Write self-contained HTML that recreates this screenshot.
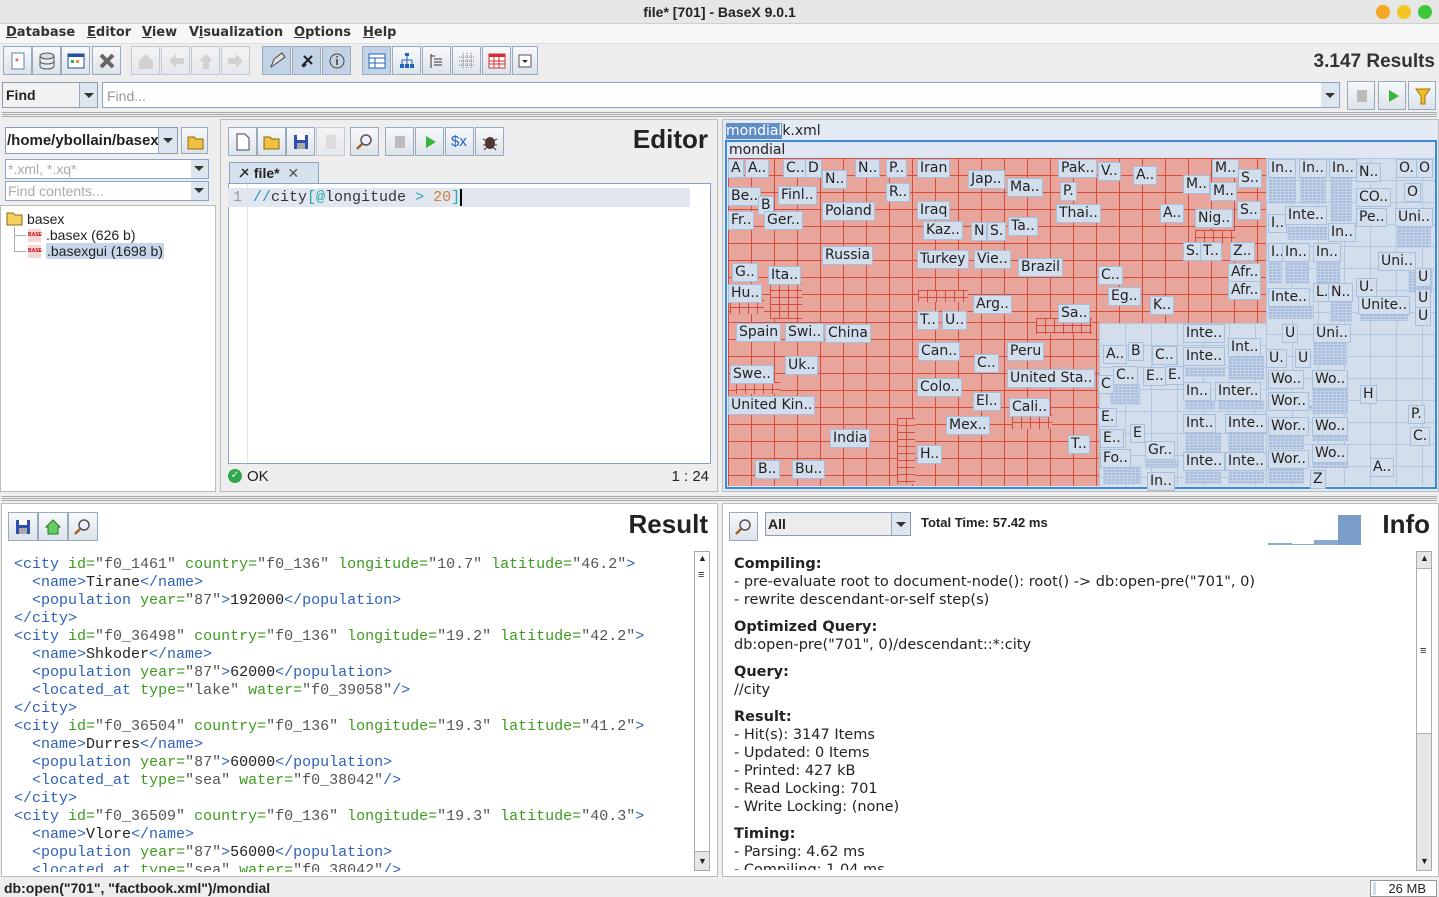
<!DOCTYPE html>
<html><head><meta charset="utf-8">
<style>
*{box-sizing:border-box;margin:0;padding:0}
body{width:1439px;height:897px;overflow:hidden;background:#eeeeee;font-family:"Liberation Sans",sans-serif;font-size:14px;color:#222;position:relative}
.a{position:absolute}
.btn{position:absolute;width:29px;height:29px;border:1px solid #9aaabd;background:linear-gradient(#f8f9fb,#dde3ea);}
.btn.sel{background:#c3d3e6}
.btn svg{position:absolute;left:5px;top:5px}
.mono{font-family:"Liberation Mono",monospace;font-size:15px}
.t{color:#2f62b8}.n{color:#3b9b1e}.v{color:#555}
.red{background-color:#e8a59c;background-image:linear-gradient(#d44c3c 1px,transparent 1px),linear-gradient(90deg,#d44c3c 1px,transparent 1px);background-size:23px 17px}
.red2{background-color:#e8a59c;background-image:linear-gradient(#d44c3c 1px,transparent 1px),linear-gradient(90deg,#d44c3c 1px,transparent 1px);background-size:9px 7px}
.blu{background-color:#d3deed;background-image:linear-gradient(#b3c6df 1px,transparent 1px),linear-gradient(90deg,#b3c6df 1px,transparent 1px);background-size:26px 22px}
.dk{position:absolute;background-color:#a9bedc;background-image:linear-gradient(#c3d2e6 1px,transparent 1px),linear-gradient(90deg,#c3d2e6 1px,transparent 1px);background-size:4px 3px}
.tm i{position:absolute;font-style:normal;font-family:"DejaVu Sans",sans-serif;font-size:14px;line-height:17px;background:#d3deed;border:1px solid #a8bfdc;padding:0 2px;color:#222;white-space:nowrap}
.info div{height:18px;line-height:18px}
.info b{font-weight:bold}
.hd{font-weight:bold;font-size:26px;color:#222}
.mn{position:absolute;top:25px;font-size:14px;font-weight:bold;color:#333;font-family:"DejaVu Sans",sans-serif;font-size:13px}
</style></head><body>
<div class="a" style="left:0;top:0;width:1439px;height:24px;background:#e6e6e5;border-bottom:1px solid #d0d0d0"></div>
<div class="a" style="left:0;top:4px;width:1439px;text-align:center;font-weight:bold;font-size:14px">file* [701] - BaseX 9.0.1</div>
<div class="a" style="left:1376px;top:5px;width:14px;height:14px;border-radius:7px;background:#f5a623"></div>
<div class="a" style="left:1397px;top:5px;width:14px;height:14px;border-radius:7px;background:#f3c623"></div>
<div class="a" style="left:1418px;top:5px;width:14px;height:14px;border-radius:7px;background:#3ec83e"></div>
<div class="a" style="left:0;top:24px;width:1439px;height:20px;background:#f7f7f7;border-bottom:1px solid #ddd"></div>
<div class="mn" style="left:6px"><u>D</u>atabase</div>
<div class="mn" style="left:87px"><u>E</u>ditor</div>
<div class="mn" style="left:142px"><u>V</u>iew</div>
<div class="mn" style="left:189px">V<u>i</u>sualization</div>
<div class="mn" style="left:294px"><u>O</u>ptions</div>
<div class="mn" style="left:363px"><u>H</u>elp</div>
<div class="btn" style="left:3px;top:46px"><svg width="18" height="18"><rect x="3" y="1" width="12" height="16" fill="#fff" stroke="#6a7ea0"/><text x="6" y="13" font-size="10" fill="#d02020">*</text></svg></div>
<div class="btn" style="left:32px;top:46px"><svg width="18" height="18"><ellipse cx="9" cy="4" rx="7" ry="3" fill="#ddd" stroke="#555"/><path d="M2 4v10c0 4 14 4 14 0V4M2 9c0 4 14 4 14 0" fill="none" stroke="#555"/></svg></div>
<div class="btn" style="left:61px;top:46px"><svg width="18" height="18"><rect x="1" y="2" width="16" height="14" fill="#fff" stroke="#2050a0"/><rect x="1" y="2" width="16" height="3" fill="#2050a0"/><rect x="4" y="8" width="3" height="3" fill="#2a7"/><rect x="9" y="8" width="3" height="3" fill="#d93"/></svg></div>
<div class="btn" style="left:92px;top:46px"><svg width="18" height="18"><path d="M3 3l12 12M15 3L3 15" stroke="#666" stroke-width="4"/></svg></div>
<div class="btn" style="left:131px;top:46px;opacity:.55"><svg width="18" height="18"><path d="M2 9l7-7 7 7v8H2z" fill="#bbb"/></svg></div>
<div class="btn" style="left:161px;top:46px;opacity:.55"><svg width="18" height="18"><path d="M2 9l7-7v4h8v6H9v4z" fill="#bbb"/></svg></div>
<div class="btn" style="left:191px;top:46px;opacity:.55"><svg width="18" height="18"><path d="M9 2l7 7h-4v8H6V9H2z" fill="#bbb"/></svg></div>
<div class="btn" style="left:221px;top:46px;opacity:.55"><svg width="18" height="18"><path d="M16 9L9 2v4H1v6h8v4z" fill="#bbb"/></svg></div>
<div class="btn sel" style="left:262px;top:46px"><svg width="18" height="18"><path d="M3 15l3-8 8-6 3 4-8 6z" fill="#ddd" stroke="#444"/></svg></div>
<div class="btn sel" style="left:292px;top:46px"><svg width="18" height="18"><path d="M4 14l10-10M6 4l8 8M8 12l-3 3" stroke="#222" stroke-width="2"/></svg></div>
<div class="btn sel" style="left:322px;top:46px"><svg width="18" height="18"><circle cx="9" cy="9" r="7" fill="none" stroke="#444"/><path d="M9 7v6M9 4v1.5" stroke="#444" stroke-width="1.6"/></svg></div>
<div class="btn sel" style="left:362px;top:46px"><svg width="18" height="18"><rect x="1" y="2" width="16" height="14" fill="#fff" stroke="#2060c0"/><path d="M1 6h16M7 6v10M1 11h16" stroke="#2060c0"/></svg></div>
<div class="btn" style="left:392px;top:46px"><svg width="18" height="18"><path d="M9 3v5M4 8h10M4 8v4M9 8v4M14 8v4" stroke="#2060c0" fill="none"/><rect x="7" y="1" width="4" height="3" fill="#2060c0"/><rect x="2" y="12" width="4" height="4" fill="#2060c0"/><rect x="7" y="12" width="4" height="4" fill="#2060c0"/><rect x="12" y="12" width="4" height="4" fill="#2060c0"/></svg></div>
<div class="btn" style="left:422px;top:46px"><svg width="18" height="18"><path d="M3 2v14M3 4h4M6 7h8M6 10h8M6 13h8" stroke="#333"/></svg></div>
<div class="btn" style="left:452px;top:46px"><svg width="18" height="18"><path d="M1 5h16M1 9h16M1 13h16M5 1v16M9 1v16M13 1v16" stroke="#777" stroke-dasharray="1 1"/></svg></div>
<div class="btn" style="left:482px;top:46px"><svg width="18" height="18"><rect x="1" y="2" width="16" height="14" fill="#fff" stroke="#d03030"/><rect x="1" y="2" width="16" height="3" fill="#d03030"/><path d="M1 9h16M1 12h16M6 5v11M11 5v11" stroke="#d03030"/></svg></div>
<div class="btn" style="left:512px;top:46px;width:26px"><svg width="14" height="18"><rect x="1" y="3" width="12" height="12" fill="#fff" stroke="#555"/><path d="M4 8h6l-3 3z" fill="#333"/></svg></div>
<div class="a" style="right:4px;top:51px;font-weight:bold;font-size:19px;color:#333">3.147 Results</div>
<div class="a" style="left:2px;top:82px;width:96px;height:26px;border:1px solid #8a9bb3;background:#f2f2f2;font-weight:bold;padding:4px 3px">Find</div>
<div class="a" style="left:79px;top:83px;width:18px;height:24px;background:#dde5ef;border-left:1px solid #9ab"><div class="a" style="left:4px;top:10px;border:5px solid transparent;border-top:5px solid #333"></div></div>
<div class="a" style="left:102px;top:82px;width:1238px;height:26px;border:1px solid #8aa4c8;background:#fff;color:#999;padding:5px 4px">Find...</div>
<div class="a" style="left:1321px;top:83px;width:18px;height:24px;background:#dde5ef"><div class="a" style="left:4px;top:10px;border:5px solid transparent;border-top:5px solid #333"></div></div>
<div class="btn" style="left:1347px;top:81px;width:28px"><div class="a" style="left:9px;top:8px;width:10px;height:12px;background:#bbb"></div></div>
<div class="btn" style="left:1378px;top:81px;width:28px"><svg width="18" height="18"><path d="M5 3l10 6-10 6z" fill="#3ab53a"/></svg></div>
<div class="btn" style="left:1408px;top:81px;width:28px"><svg width="18" height="18"><path d="M2 2h14l-5 7v8h-4V9z" fill="#f0c020" stroke="#a07010"/></svg></div>
<div class="a" style="left:2px;top:112px;width:1435px;height:5px;border-top:1px solid #aaa;border-bottom:1px solid #aaa"><div style="border-top:1px solid #aaa;margin-top:1px"></div></div>
<div class="a" style="left:0;top:119px;width:216px;height:373px;background:#fff;border:1px solid #bbb"></div>
<div class="a" style="left:0;top:119px;width:216px;height:86px;background:#eee"></div>
<div class="a" style="left:5px;top:127px;width:173px;height:27px;border:1px solid #8a9bb3;background:#fff;font-weight:bold;font-size:15px;padding:4px 1px;overflow:hidden;white-space:nowrap">/home/ybollain/basex</div>
<div class="a" style="left:158px;top:128px;width:19px;height:25px;background:#dde5ef;border-left:1px solid #9ab"><div class="a" style="left:4px;top:10px;border:5px solid transparent;border-top:5px solid #333"></div></div>
<div class="btn" style="left:181px;top:127px;width:27px;height:27px"><svg width="18" height="18"><path d="M1 4h6l2 2h7v10H1z" fill="#f0c040" stroke="#8a6a10"/></svg></div>
<div class="a" style="left:5px;top:159px;width:204px;height:20px;border:1px solid #8aa4c8;background:#fff;color:#aaa;padding:1px 2px">*.xml, *.xq*</div>
<div class="a" style="left:191px;top:160px;width:17px;height:18px;background:#dde5ef"><div class="a" style="left:3px;top:6px;border:5px solid transparent;border-top:5px solid #333"></div></div>
<div class="a" style="left:5px;top:181px;width:204px;height:20px;border:1px solid #8aa4c8;background:#fff;color:#aaa;padding:1px 2px">Find contents...</div>
<div class="a" style="left:191px;top:182px;width:17px;height:18px;background:#dde5ef"><div class="a" style="left:3px;top:6px;border:5px solid transparent;border-top:5px solid #333"></div></div>
<div class="a" style="left:0;top:205px;width:216px;border-top:1px solid #bbb"></div>
<svg class="a" style="left:6px;top:211px" width="18" height="15"><path d="M1 2h6l2 2h7v10H1z" fill="#f7d060" stroke="#8a6a10"/></svg>
<div class="a" style="left:27px;top:211px;font-size:14px">basex</div>
<div class="a" style="left:14px;top:227px;width:1px;height:25px;background:#aab"></div>
<div class="a" style="left:14px;top:235px;width:12px;height:1px;background:#aab"></div>
<div class="a" style="left:14px;top:251px;width:12px;height:1px;background:#aab"></div>
<div class="a" style="left:28px;top:229px;width:13px;height:13px;background:#f3d6d6;font-size:5px;color:#c00;font-weight:bold;line-height:13px">BASE</div>
<div class="a" style="left:28px;top:245px;width:13px;height:13px;background:#f3d6d6;font-size:5px;color:#c00;font-weight:bold;line-height:13px">BASE</div>
<div class="a" style="left:46px;top:227px;font-size:14px">.basex (626 b)</div>
<div class="a" style="left:46px;top:243px;font-size:14px;background:#c6d5ea;padding:0 1px">.basexgui (1698 b)</div>
<div class="a" style="left:220px;top:119px;width:498px;height:373px;background:#eee;border:1px solid #bbb"></div>
<div class="btn" style="left:228px;top:127px"><svg width="18" height="18"><path d="M3 1h8l4 4v12H3z" fill="#fff" stroke="#445"/></svg></div>
<div class="btn" style="left:257px;top:127px"><svg width="18" height="18"><path d="M1 4h6l2 2h7v10H1z" fill="#f0c040" stroke="#8a6a10"/></svg></div>
<div class="btn" style="left:286px;top:127px"><svg width="18" height="18"><rect x="2" y="2" width="14" height="14" fill="#3050b0"/><rect x="5" y="2" width="8" height="5" fill="#fff"/><rect x="5" y="10" width="8" height="6" fill="#aaa"/></svg></div>
<div class="btn" style="left:316px;top:127px;opacity:.5"><svg width="18" height="18"><rect x="4" y="2" width="10" height="14" fill="#ccc"/></svg></div>
<div class="btn" style="left:350px;top:127px"><svg width="18" height="18"><circle cx="10" cy="7" r="5" fill="#eef" stroke="#555" stroke-width="1.5"/><path d="M6 11l-5 5" stroke="#a06020" stroke-width="2.5"/></svg></div>
<div class="btn" style="left:385px;top:127px"><div class="a" style="left:9px;top:8px;width:10px;height:12px;background:#bbb"></div></div>
<div class="btn" style="left:415px;top:127px"><svg width="18" height="18"><path d="M5 3l10 6-10 6z" fill="#3ab53a"/></svg></div>
<div class="btn" style="left:445px;top:127px"><span class="a" style="left:5px;top:5px;color:#2060c0;font-size:15px">$x</span></div>
<div class="btn" style="left:475px;top:127px"><svg width="18" height="18"><ellipse cx="9" cy="10" rx="5" ry="6" fill="#533"/><path d="M2 6l4 2M16 6l-4 2M2 12h4M12 12h4M3 17l3-3M15 17l-3-3" stroke="#333"/></svg></div>
<div class="a hd" style="right:731px;top:124px">Editor</div>
<div class="a" style="left:229px;top:162px;width:90px;height:22px;background:#d6e1ee;border:1px solid #8aa4c8;border-bottom:none;font-weight:bold;font-size:14px;padding:2px 8px"><svg width="12" height="12" style="vertical-align:-1px"><path d="M2 10l8-8M4 2l6 6" stroke="#222" stroke-width="1.5"/></svg>&nbsp;file*&nbsp;&nbsp;<span style="font-weight:normal;color:#555">&#x2715;</span></div>
<div class="a" style="left:228px;top:183px;width:483px;height:281px;background:#fff;border:1px solid #8aa4c8"></div>
<div class="a" style="left:248px;top:188px;width:442px;height:19px;background:#e1e7f0"></div>
<div class="a" style="left:228px;top:188px;width:20px;height:19px;background:#e1e7f0"></div>
<div class="a" style="left:247px;top:184px;width:1px;height:279px;background:#e4e4e4"></div>
<div class="a mono" style="left:233px;top:189px;color:#999">1</div>
<div class="a mono" style="left:253px;top:189px;color:#333"><span style="color:#2a8fbd">//</span>city<span style="color:#2aa8a8">[@</span>longitude <span style="color:#2aa8a8">&gt;</span> <span style="color:#d0803a">20</span><span style="color:#2aa8a8">]</span><span style="border-left:2px solid #000"></span></div>
<div class="a" style="left:228px;top:469px;width:14px;height:14px;border-radius:7px;background:#2ea84a;color:#fff;font-size:10px;text-align:center;line-height:14px">&#10003;</div>
<div class="a" style="left:247px;top:468px;font-size:15px">OK</div>
<div class="a" style="right:730px;top:468px;font-size:15px">1 : 24</div>
<div class="a" style="left:722px;top:119px;width:717px;height:373px;background:#e3eaf4;border:1px solid #bbb"></div>
<div class="a" style="left:726px;top:123px;font-size:15px;line-height:17px;font-family:'DejaVu Sans',sans-serif;font-size:14px"><span style="background:#5f8dc8;color:#fff">mondial</span>k.xml</div>
<div class="a" style="left:725px;top:140px;width:712px;height:349px;border:2px solid #3a8ad8;background:#dfe6f1"></div>
<div class="a" style="left:729px;top:142px;font-size:14px;font-family:'DejaVu Sans',sans-serif">mondial</div>
<div class="tm">
<div class="a red" style="left:728px;top:158px;width:538px;height:165px"></div>
<div class="a red" style="left:728px;top:322px;width:371px;height:164px"></div>
<div class="a red2" style="left:770px;top:283px;width:32px;height:36px"></div>
<div class="a red2" style="left:897px;top:418px;width:18px;height:66px"></div>
<div class="a red2" style="left:1036px;top:318px;width:56px;height:16px"></div>
<div class="a red2" style="left:1012px;top:415px;width:40px;height:14px"></div>
<div class="a red2" style="left:1195px;top:230px;width:40px;height:14px"></div>
<div class="a red2" style="left:730px;top:300px;width:34px;height:14px"></div>
<div class="a red2" style="left:736px;top:382px;width:44px;height:12px"></div>
<div class="a red2" style="left:918px;top:290px;width:50px;height:12px"></div>
<div class="a blu" style="left:1266px;top:158px;width:169px;height:328px"></div>
<div class="a blu" style="left:1099px;top:323px;width:167px;height:163px"></div>
<div class="dk" style="left:1268px;top:176px;width:28px;height:28px"></div>
<div class="dk" style="left:1300px;top:176px;width:26px;height:28px"></div>
<div class="dk" style="left:1330px;top:176px;width:22px;height:46px"></div>
<div class="dk" style="left:1287px;top:226px;width:40px;height:14px"></div>
<div class="dk" style="left:1397px;top:226px;width:34px;height:22px"></div>
<div class="dk" style="left:1268px;top:262px;width:14px;height:22px"></div>
<div class="dk" style="left:1285px;top:262px;width:24px;height:22px"></div>
<div class="dk" style="left:1316px;top:262px;width:24px;height:22px"></div>
<div class="dk" style="left:1408px;top:268px;width:25px;height:25px"></div>
<div class="dk" style="left:1268px;top:305px;width:46px;height:14px"></div>
<div class="dk" style="left:1330px;top:300px;width:22px;height:22px"></div>
<div class="dk" style="left:1360px;top:313px;width:48px;height:8px"></div>
<div class="dk" style="left:1313px;top:341px;width:34px;height:24px"></div>
<div class="dk" style="left:1312px;top:388px;width:36px;height:26px"></div>
<div class="dk" style="left:1228px;top:355px;width:36px;height:25px"></div>
<div class="dk" style="left:1185px;top:367px;width:40px;height:10px"></div>
<div class="dk" style="left:1110px;top:383px;width:30px;height:22px"></div>
<div class="dk" style="left:1185px;top:400px;width:30px;height:10px"></div>
<div class="dk" style="left:1218px;top:400px;width:46px;height:10px"></div>
<div class="dk" style="left:1185px;top:432px;width:36px;height:20px"></div>
<div class="dk" style="left:1228px;top:432px;width:36px;height:20px"></div>
<div class="dk" style="left:1268px;top:435px;width:36px;height:14px"></div>
<div class="dk" style="left:1312px;top:435px;width:36px;height:6px"></div>
<div class="dk" style="left:1268px;top:405px;width:44px;height:5px"></div>
<div class="dk" style="left:1145px;top:460px;width:34px;height:8px"></div>
<div class="dk" style="left:1103px;top:466px;width:38px;height:18px"></div>
<div class="dk" style="left:1185px;top:468px;width:36px;height:16px"></div>
<div class="dk" style="left:1228px;top:468px;width:36px;height:16px"></div>
<div class="dk" style="left:1268px;top:468px;width:36px;height:16px"></div>
<div class="dk" style="left:1312px;top:462px;width:36px;height:6px"></div>
<i style="left:728px;top:159px">A</i><i style="left:745px;top:159px">A..</i><i style="left:783px;top:159px">C..</i><i style="left:805px;top:159px">D</i>
<i style="left:822px;top:170px">N..</i><i style="left:855px;top:159px">N..</i><i style="left:886px;top:159px">P..</i><i style="left:917px;top:159px">Iran</i>
<i style="left:968px;top:170px">Jap..</i><i style="left:1007px;top:178px">Ma..</i><i style="left:1058px;top:159px">Pak..</i><i style="left:1098px;top:162px">V..</i><i style="left:1133px;top:166px">A..</i>
<i style="left:1212px;top:159px">M..</i><i style="left:1238px;top:169px">S..</i>
<i style="left:728px;top:187px">Be..</i><i style="left:758px;top:196px">B</i><i style="left:778px;top:186px">Finl..</i><i style="left:886px;top:183px">R..</i><i style="left:1060px;top:182px">P.</i><i style="left:1210px;top:182px">M..</i><i style="left:1183px;top:175px">M..</i>
<i style="left:822px;top:202px">Poland</i><i style="left:917px;top:201px">Iraq</i><i style="left:1056px;top:204px">Thai..</i><i style="left:1160px;top:204px">A..</i><i style="left:1195px;top:209px">Nig..</i><i style="left:1237px;top:201px">S..</i>
<i style="left:728px;top:211px">Fr..</i><i style="left:764px;top:211px">Ger..</i><i style="left:923px;top:221px">Kaz..</i><i style="left:971px;top:222px">N</i><i style="left:987px;top:222px">S.</i><i style="left:1008px;top:217px">Ta..</i>
<i style="left:822px;top:246px">Russia</i><i style="left:917px;top:250px">Turkey</i><i style="left:974px;top:250px">Vie..</i><i style="left:1018px;top:258px">Brazil</i><i style="left:1183px;top:242px">S.</i><i style="left:1200px;top:242px">T..</i><i style="left:1230px;top:242px">Z..</i>
<i style="left:732px;top:263px">G..</i><i style="left:768px;top:266px">Ita..</i><i style="left:728px;top:284px">Hu..</i><i style="left:1098px;top:266px">C..</i><i style="left:1228px;top:263px">Afr..</i><i style="left:1228px;top:281px">Afr..</i>
<i style="left:973px;top:295px">Arg..</i><i style="left:1108px;top:287px">Eg..</i><i style="left:1150px;top:296px">K..</i><i style="left:1058px;top:304px">Sa..</i><i style="left:917px;top:311px">T..</i><i style="left:942px;top:311px">U..</i>
<i style="left:736px;top:323px">Spain</i><i style="left:785px;top:323px">Swi..</i><i style="left:825px;top:324px">China</i><i style="left:1183px;top:324px">Inte..</i><i style="left:1313px;top:324px">Uni..</i>
<i style="left:918px;top:342px">Can..</i><i style="left:1007px;top:342px">Peru</i><i style="left:785px;top:356px">Uk..</i><i style="left:974px;top:354px">C..</i><i style="left:1183px;top:347px">Inte..</i><i style="left:1228px;top:338px">Int..</i>
<i style="left:730px;top:365px">Swe..</i><i style="left:1007px;top:369px">United Sta..</i><i style="left:1113px;top:366px">C..</i><i style="left:1268px;top:370px">Wo..</i><i style="left:1312px;top:370px">Wo..</i>
<i style="left:917px;top:378px">Colo..</i><i style="left:1183px;top:382px">In..</i><i style="left:1215px;top:382px">Inter..</i><i style="left:1268px;top:392px">Wor..</i>
<i style="left:728px;top:396px">United Kin..</i><i style="left:973px;top:392px">El..</i><i style="left:1009px;top:398px">Cali..</i>
<i style="left:946px;top:416px">Mex..</i><i style="left:1183px;top:414px">Int..</i><i style="left:1225px;top:414px">Inte..</i><i style="left:1268px;top:417px">Wor..</i><i style="left:1312px;top:417px">Wo..</i>
<i style="left:830px;top:429px">India</i><i style="left:1068px;top:435px">T..</i><i style="left:1100px;top:429px">E..</i><i style="left:1145px;top:441px">Gr..</i><i style="left:917px;top:445px">H..</i><i style="left:1312px;top:444px">Wo..</i>
<i style="left:1100px;top:449px">Fo..</i><i style="left:1183px;top:452px">Inte..</i><i style="left:1225px;top:452px">Inte..</i><i style="left:1268px;top:450px">Wor..</i>
<i style="left:755px;top:460px">B..</i><i style="left:792px;top:460px">Bu..</i><i style="left:1147px;top:472px">In..</i>
<i style="left:1268px;top:214px">I..</i><i style="left:1285px;top:206px">Inte..</i><i style="left:1328px;top:223px">In..</i><i style="left:1268px;top:159px">In..</i><i style="left:1299px;top:159px">In..</i><i style="left:1329px;top:159px">In..</i>
<i style="left:1356px;top:163px">N..</i><i style="left:1396px;top:159px">O.</i><i style="left:1416px;top:159px">O</i><i style="left:1356px;top:188px">CO..</i><i style="left:1356px;top:208px">Pe..</i><i style="left:1395px;top:208px">Uni..</i><i style="left:1404px;top:183px">O</i>
<i style="left:1268px;top:243px">I..</i><i style="left:1282px;top:243px">In..</i><i style="left:1313px;top:243px">In..</i><i style="left:1378px;top:252px">Uni..</i><i style="left:1268px;top:288px">Inte..</i><i style="left:1313px;top:283px">L.</i><i style="left:1328px;top:283px">N..</i>
<i style="left:1356px;top:278px">U.</i><i style="left:1358px;top:296px">Unite..</i><i style="left:1415px;top:268px">U</i><i style="left:1415px;top:289px">U</i><i style="left:1415px;top:307px">U</i>
<i style="left:1282px;top:324px">U</i><i style="left:1266px;top:349px">U.</i><i style="left:1295px;top:349px">U</i><i style="left:1360px;top:385px">H</i><i style="left:1408px;top:405px">P.</i><i style="left:1410px;top:427px">C.</i><i style="left:1370px;top:458px">A..</i><i style="left:1310px;top:470px">Z</i>
<i style="left:1103px;top:345px">A..</i><i style="left:1128px;top:342px">B</i><i style="left:1152px;top:346px">C..</i><i style="left:1098px;top:375px">C</i><i style="left:1143px;top:367px">E..</i><i style="left:1165px;top:366px">E.</i><i style="left:1098px;top:408px">E.</i><i style="left:1130px;top:424px">E</i>
</div>
<div class="a" style="left:2px;top:496px;width:1435px;height:5px;border-top:1px solid #aaa;border-bottom:1px solid #aaa"><div style="border-top:1px solid #aaa;margin-top:1px"></div></div>
<div class="a" style="left:1px;top:503px;width:717px;height:374px;background:#fff;border:1px solid #bbb"></div>
<div class="btn" style="left:8px;top:512px;width:30px"><svg width="18" height="18"><rect x="2" y="2" width="14" height="14" fill="#3050b0"/><rect x="5" y="2" width="8" height="5" fill="#fff"/><rect x="5" y="10" width="8" height="6" fill="#aaa"/></svg></div>
<div class="btn" style="left:38px;top:512px;width:30px"><svg width="18" height="18"><path d="M2 9l7-7 7 7h-2v7H4V9z" fill="#6c6" stroke="#272"/></svg></div>
<div class="btn" style="left:68px;top:512px;width:30px"><svg width="18" height="18"><circle cx="10" cy="7" r="5" fill="#eef" stroke="#555" stroke-width="1.5"/><path d="M6 11l-5 5" stroke="#a06020" stroke-width="2.5"/></svg></div>
<div class="a hd" style="right:731px;top:509px">Result</div>
<div class="a mono" style="left:14px;top:556px;line-height:18px;white-space:pre;color:#222"><span class="t">&lt;city</span> <span class="n">id=</span><span class="v">"f0_1461"</span> <span class="n">country=</span><span class="v">"f0_136"</span> <span class="n">longitude=</span><span class="v">"10.7"</span> <span class="n">latitude=</span><span class="v">"46.2"</span><span class="t">&gt;</span>
  <span class="t">&lt;name&gt;</span>Tirane<span class="t">&lt;/name&gt;</span>
  <span class="t">&lt;population</span> <span class="n">year=</span><span class="v">"87"</span><span class="t">&gt;</span>192000<span class="t">&lt;/population&gt;</span>
<span class="t">&lt;/city&gt;</span>
<span class="t">&lt;city</span> <span class="n">id=</span><span class="v">"f0_36498"</span> <span class="n">country=</span><span class="v">"f0_136"</span> <span class="n">longitude=</span><span class="v">"19.2"</span> <span class="n">latitude=</span><span class="v">"42.2"</span><span class="t">&gt;</span>
  <span class="t">&lt;name&gt;</span>Shkoder<span class="t">&lt;/name&gt;</span>
  <span class="t">&lt;population</span> <span class="n">year=</span><span class="v">"87"</span><span class="t">&gt;</span>62000<span class="t">&lt;/population&gt;</span>
  <span class="t">&lt;located_at</span> <span class="n">type=</span><span class="v">"lake"</span> <span class="n">water=</span><span class="v">"f0_39058"</span><span class="t">/&gt;</span>
<span class="t">&lt;/city&gt;</span>
<span class="t">&lt;city</span> <span class="n">id=</span><span class="v">"f0_36504"</span> <span class="n">country=</span><span class="v">"f0_136"</span> <span class="n">longitude=</span><span class="v">"19.3"</span> <span class="n">latitude=</span><span class="v">"41.2"</span><span class="t">&gt;</span>
  <span class="t">&lt;name&gt;</span>Durres<span class="t">&lt;/name&gt;</span>
  <span class="t">&lt;population</span> <span class="n">year=</span><span class="v">"87"</span><span class="t">&gt;</span>60000<span class="t">&lt;/population&gt;</span>
  <span class="t">&lt;located_at</span> <span class="n">type=</span><span class="v">"sea"</span> <span class="n">water=</span><span class="v">"f0_38042"</span><span class="t">/&gt;</span>
<span class="t">&lt;/city&gt;</span>
<span class="t">&lt;city</span> <span class="n">id=</span><span class="v">"f0_36509"</span> <span class="n">country=</span><span class="v">"f0_136"</span> <span class="n">longitude=</span><span class="v">"19.3"</span> <span class="n">latitude=</span><span class="v">"40.3"</span><span class="t">&gt;</span>
  <span class="t">&lt;name&gt;</span>Vlore<span class="t">&lt;/name&gt;</span>
  <span class="t">&lt;population</span> <span class="n">year=</span><span class="v">"87"</span><span class="t">&gt;</span>56000<span class="t">&lt;/population&gt;</span>
</div>
<div class="a mono" style="left:14px;top:862px;height:10px;overflow:hidden;line-height:18px;white-space:pre">  <span class="t">&lt;located_at</span> <span class="n">type=</span><span class="v">"sea"</span> <span class="n">water=</span><span class="v">"f0_38042"</span><span class="t">/&gt;</span></div>
<div class="a" style="left:694px;top:551px;width:16px;height:320px;border:1px solid #aaa;background:#e6e6e6"></div>
<div class="a" style="left:695px;top:552px;width:14px;height:300px;background:#fff;border-bottom:1px solid #aaa"></div>
<div class="a" style="left:698px;top:553px;font-size:9px">&#9650;</div>
<div class="a" style="left:698px;top:569px;font-size:11px">&#8801;</div>
<div class="a" style="left:698px;top:856px;font-size:9px">&#9660;</div>
<div class="a" style="left:722px;top:503px;width:717px;height:374px;background:#fff;border:1px solid #bbb"></div>
<div class="btn" style="left:729px;top:512px;width:29px"><svg width="18" height="18"><circle cx="10" cy="7" r="5" fill="#eef" stroke="#555" stroke-width="1.5"/><path d="M6 11l-5 5" stroke="#a06020" stroke-width="2.5"/></svg></div>
<div class="a" style="left:765px;top:512px;width:146px;height:24px;border:1px solid #8a9bb3;background:#ececec;font-weight:bold;padding:3px 2px">All</div>
<div class="a" style="left:891px;top:513px;width:19px;height:22px;background:#dde5ef;border-left:1px solid #9ab"><div class="a" style="left:4px;top:9px;border:5px solid transparent;border-top:5px solid #333"></div></div>
<div class="a" style="left:921px;top:515px;font-weight:bold;font-size:13px">Total Time: 57.42 ms</div>
<div class="a" style="left:1268px;top:543px;width:24px;height:2px;background:#8aa8d0"></div>
<div class="a" style="left:1292px;top:544px;width:22px;height:1px;background:#8aa8d0"></div>
<div class="a" style="left:1314px;top:540px;width:24px;height:5px;background:#8aa8d0"></div>
<div class="a" style="left:1338px;top:515px;width:23px;height:30px;background:#7a9cc8"></div>
<div class="a hd" style="right:9px;top:509px">Info</div>
<div class="a info" style="left:734px;top:555px;font-size:15px;color:#222;font-family:'DejaVu Sans',sans-serif;font-size:14.5px">
<div><b>Compiling:</b></div>
<div>- pre-evaluate root to document-node(): root() -&gt; db:open-pre("701", 0)</div>
<div>- rewrite descendant-or-self step(s)</div>
<div style="height:9px"></div>
<div><b>Optimized Query:</b></div>
<div>db:open-pre("701", 0)/descendant::*:city</div>
<div style="height:9px"></div>
<div><b>Query:</b></div>
<div>//city</div>
<div style="height:9px"></div>
<div><b>Result:</b></div>
<div>- Hit(s): 3147 Items</div>
<div>- Updated: 0 Items</div>
<div>- Printed: 427 kB</div>
<div>- Read Locking: 701</div>
<div>- Write Locking: (none)</div>
<div style="height:9px"></div>
<div><b>Timing:</b></div>
<div>- Parsing: 4.62 ms</div>
<div style="height:9px;overflow:hidden">- Compiling: 1.04 ms</div>
</div>
<div class="a" style="left:1416px;top:551px;width:16px;height:320px;border:1px solid #aaa;background:#e6e6e6"></div>
<div class="a" style="left:1417px;top:568px;width:14px;height:166px;background:#fff;border-top:1px solid #aaa;border-bottom:1px solid #aaa"></div>
<div class="a" style="left:1420px;top:553px;font-size:9px">&#9650;</div>
<div class="a" style="left:1420px;top:645px;font-size:11px">&#8801;</div>
<div class="a" style="left:1420px;top:856px;font-size:9px">&#9660;</div>
<div class="a" style="left:4px;top:880px;font-weight:bold;font-size:14px;color:#222">db:open("701", "factbook.xml")/mondial</div>
<div class="a" style="left:1370px;top:880px;width:67px;height:17px;border:1px solid #999;background:#fff;font-size:13px;text-align:right;padding-right:10px;line-height:15px"><span style="position:absolute;left:2px;top:1px;width:3px;height:13px;background:#cde"></span>26 MB</div>
</body></html>
